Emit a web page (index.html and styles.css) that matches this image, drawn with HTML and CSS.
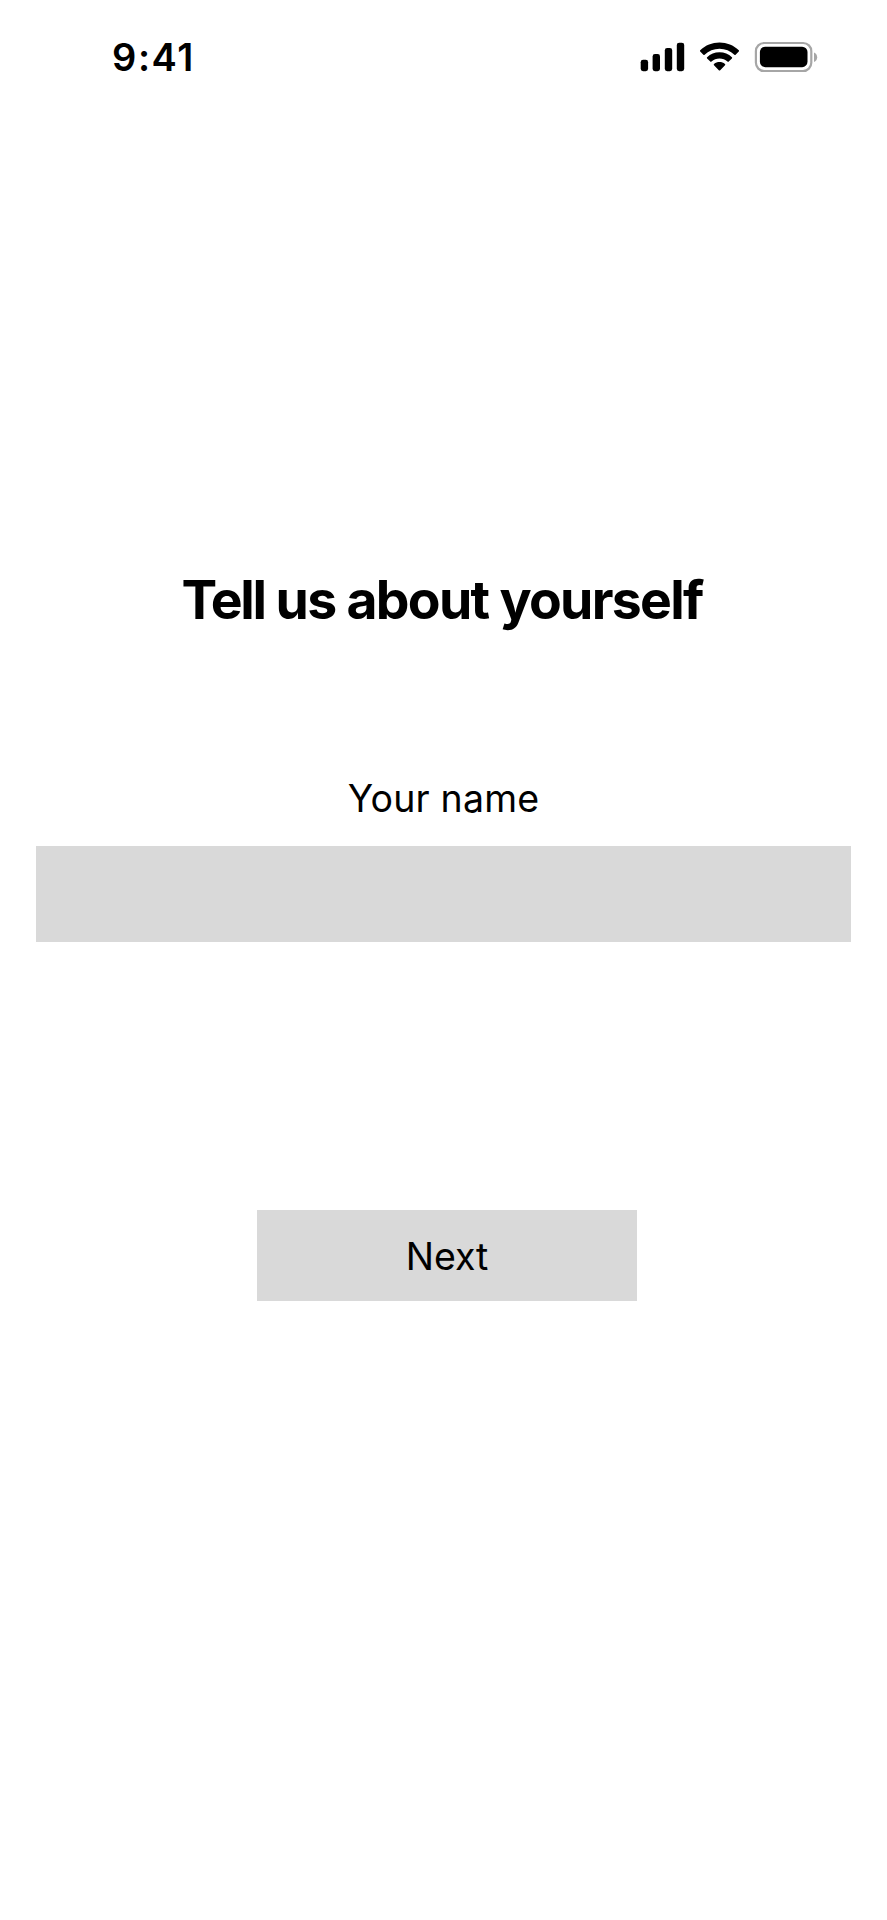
FILE: index.html
```html
<!DOCTYPE html>
<html lang="en">
<head>
<meta charset="utf-8">
<title>Tell us about yourself</title>
<link rel="stylesheet" href="styles.css">
</head>
<body>
<header class="status-bar">
  <span class="time">9:41</span>
  <svg class="status-icons" width="180" height="34" viewBox="640 40 180 34" aria-hidden="true">
    <rect x="640.7" y="59.8" width="7.4" height="11.4" rx="2.4"/>
    <rect x="652.6" y="54" width="7.4" height="17.2" rx="2.4"/>
    <rect x="664.8" y="48.1" width="7.4" height="23.1" rx="2.4"/>
    <rect x="676.8" y="42.7" width="7.4" height="28.5" rx="2.4"/>
    <path d="M719.5 48.7C725.2 48.7 730.4 50.9 734.4 54.7Q735 55.3 735.6 54.7L738.8 51.5Q739.4 50.8 738.8 50.2C733.5 45.3 726.9 42.5 719.5 42.5S705.5 45.3 700.2 50.2Q699.6 50.8 700.2 51.5L703.4 54.7Q704 55.3 704.6 54.7C708.6 50.9 713.8 48.7 719.5 48.7Z"/>
    <path d="M719.5 58.5C722.6 58.5 725.3 59.6 727.5 61.6Q728.1 62.2 728.7 61.6L731.9 58.4Q732.5 57.8 731.9 57.2C728.6 54 724.3 52.3 719.5 52.3S710.4 54 707.1 57.2Q706.5 57.8 707.1 58.4L710.3 61.6Q710.9 62.2 711.5 61.6C713.7 59.6 716.4 58.5 719.5 58.5Z"/>
    <path d="M725 64Q725.6 64.6 725 65.2L720.2 70.2Q719.5 70.9 718.8 70.2L714 65.2Q713.4 64.6 714 64C717.1 61.4 721.9 61.4 725 64Z"/>
    <rect class="battery-shell" x="755.9" y="43" width="55.4" height="28" rx="8.2"/>
    <rect x="759.9" y="46.7" width="47.6" height="20.5" rx="5.4"/>
    <path class="battery-tip" d="M814 52.5V62C815.9 61.2 817.2 59.4 817.2 57.2S815.9 53.3 814 52.5Z"/>
  </svg>
</header>
<main class="screen">
  <h1 class="title"><span class="tight">Tell</span> us about yourself</h1>
  <form class="form">
    <label class="label" for="name">Your name</label>
    <input class="field" id="name" type="text">
    <button class="next" type="button">Next</button>
  </form>
</main>
</body>
</html>
```
FILE: styles.css
```css
* {
  box-sizing: border-box;
}

body {
  margin: 0;
  min-height: 1920px;
  background: #fff;
  color: #000;
  font-family: Inter, "Liberation Sans", sans-serif;
}

.status-bar {
  display: flex;
  justify-content: space-between;
  align-items: center;
  height: 114px;
  padding: 0 67px 0 112px;
}

.time {
  font-size: 38px;
  font-weight: 600;
  line-height: 48px;
  letter-spacing: 1.6px;
}

.status-icons {
  display: block;
}

.battery-shell {
  fill: none;
  stroke: #a6a6a6;
  stroke-width: 2.2;
}

.battery-tip {
  fill: #a6a6a6;
}

.screen {
  padding: 451px 36.4px 0;
}

.title {
  margin: 0;
  padding-right: 3px;
  font-size: 53.5px;
  font-weight: 700;
  line-height: 70px;
  letter-spacing: -1.7px;
  text-align: center;
  white-space: nowrap;
}

.tight {
  letter-spacing: -2.3px;
}

.form {
  display: flex;
  flex-direction: column;
  align-items: center;
  padding-top: 139px;
}

.label {
  font-size: 37.5px;
  line-height: 50px;
  letter-spacing: 0.2px;
}

.field {
  align-self: stretch;
  height: 96px;
  margin-top: 22px;
  padding: 0 24px;
  border: 0;
  border-radius: 0;
  background: #d9d9d9;
  font: inherit;
  font-size: 37.5px;
}

.next {
  width: 380px;
  height: 91px;
  margin: 268px 0 0 7px;
  padding: 2px 0 0;
  border: 0;
  background: #d9d9d9;
  color: #000;
  font: inherit;
  font-size: 37.5px;
}
```
